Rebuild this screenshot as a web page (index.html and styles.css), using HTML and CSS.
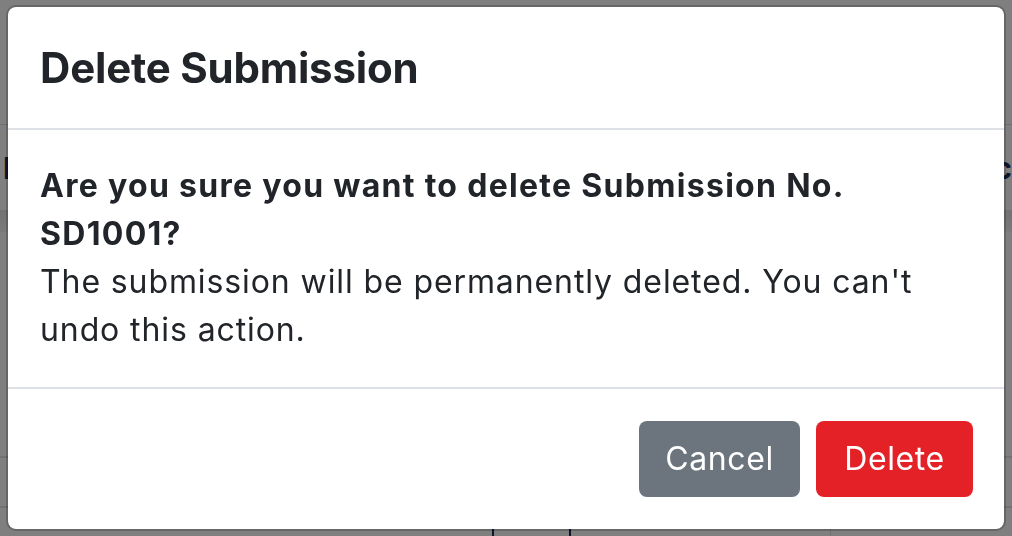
FILE: index.html
```html
<!DOCTYPE html>
<html lang="en">
<head>
<meta charset="utf-8">
<title>Delete Submission</title>
<link rel="stylesheet" href="styles.css">
</head>
<body>
<div class="page">
  <div class="page-top"></div>
  <div class="page-row"><span class="page-word">b</span><span class="page-word">c</span></div>
  <div class="page-band"></div>
  <div class="page-block"></div>
  <div class="page-block small"></div>
  <div class="page-foot">
    <span class="foot-cell c1"></span>
    <span class="foot-cell c2"></span>
    <span class="foot-cell c3"></span>
  </div>
</div>
<div class="overlay">
  <div class="modal">
    <div class="modal-header">
      <h5 class="modal-title">Delete Submission</h5>
    </div>
    <div class="modal-body">
      <p class="question">Are you sure you want to delete Submission No. SD1001?</p>
      <p class="note">The submission will be permanently deleted. You can't undo this action.</p>
    </div>
    <div class="modal-footer">
      <button class="btn btn-cancel" type="button">Cancel</button>
      <button class="btn btn-delete" type="button">Delete</button>
    </div>
  </div>
</div>
</body>
</html>
```
FILE: styles.css
```css
html, body {
  margin: 0;
  padding: 0;
}
body {
  width: 1012px;
  height: 536px;
  overflow: hidden;
  background: #ffffff;
  font-family: Inter, "Liberation Sans", sans-serif;
  color: #212529;
}
.page {
  width: 1012px;
}
.page-top {
  height: 124px;
  border-bottom: 1px solid #dee2e6;
}
.page-row {
  height: 85px;
  display: flex;
  justify-content: space-between;
  align-items: center;
  padding: 0 0 0 3px;
  font-size: 30px;
  font-weight: 700;
  color: #1e2a55;
}
.page-band {
  height: 22px;
  background: linear-gradient(#e4e4e4, #f4f4f4);
}
.page-block {
  height: 224px;
  border-bottom: 2px solid #dee2e6;
}
.page-block.small {
  height: 48px;
}
.page-foot {
  height: 30px;
  display: flex;
}
.foot-cell {
  display: block;
  height: 30px;
}
.foot-cell.c1 {
  width: 492px;
  border-right: 2px solid #1e2a55;
}
.foot-cell.c2 {
  width: 75px;
  border-right: 2px solid #1e2a55;
}
.foot-cell.c3 {
  width: 259px;
  border-right: 1px solid #dee2e6;
}

.overlay {
  position: fixed;
  inset: 0;
  background: rgba(0, 0, 0, 0.5);
  padding: 5px 6px;
}
.modal {
  width: 1000px;
  box-sizing: border-box;
  background: #ffffff;
  background-clip: padding-box;
  border: 2px solid rgba(0, 0, 0, 0.2);
  border-radius: 10px;
}
.modal-header {
  height: 121px;
  padding: 0 32px;
  display: flex;
  align-items: center;
  border-bottom: 2px solid #dee2e6;
}
.modal-title {
  margin: 0;
  font-size: 42px;
  font-weight: 700;
  line-height: 60px;
  letter-spacing: -0.2px;
  color: #212529;
}
.modal-body {
  padding: 32px 32px 33px;
  font-size: 32px;
  line-height: 48px;
}
.modal-body p {
  margin: 0;
}
.question {
  font-weight: 700;
  letter-spacing: 1.3px;
}
.note {
  font-weight: 400;
  letter-spacing: 0.9px;
}
.modal-footer {
  border-top: 2px solid #dee2e6;
  padding: 32px 31px 32px;
  display: flex;
  justify-content: flex-end;
  gap: 16px;
}
.btn {
  height: 76px;
  border: none;
  border-radius: 8px;
  color: #ffffff;
  font-family: inherit;
  font-size: 32px;
  line-height: 48px;
  letter-spacing: 0.6px;
  padding: 0;
}
.btn-cancel {
  width: 161px;
  background: #6c757d;
}
.btn-delete {
  width: 157px;
  background: #e42127;
}
```
